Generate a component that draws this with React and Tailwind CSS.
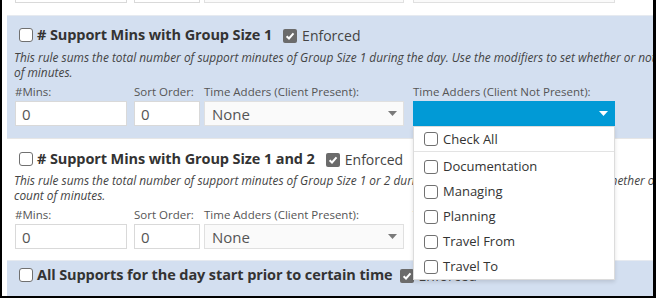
import React from "react";

function Box({ checked }) {
  if (checked)
    return (
      <span className="inline-flex w-[14px] h-[14px] shrink-0 rounded-[2px] bg-[#6b6b6b] items-center justify-center">
        <svg width="10" height="10" viewBox="0 0 10 10">
          <path d="M1.6 5.2 L4 7.5 L8.5 2.4" stroke="white" strokeWidth="2" fill="none" />
        </svg>
      </span>
    );
  return <span className="inline-block w-[14px] h-[14px] shrink-0 rounded-[3px] border border-[#707070] bg-white" />;
}

function Caret({ white }) {
  return (
    <svg width="9" height="5" viewBox="0 0 9 5" className="shrink-0">
      <path d="M0 0 L9 0 L4.5 5 Z" fill={white ? "#ffffff" : "#7a7a7a"} />
    </svg>
  );
}

function TextInput({ w, value }) {
  return (
    <div className={`${w} h-[25px] bg-white border border-[#d9d9d9] flex items-center pl-[6px] text-[15px] text-[#555]`}>
      {value}
    </div>
  );
}

function BoxesOnly() {
  return (
    <div className="flex items-start pl-[8px]">
      <div className="w-[112px] h-[25px] bg-white border border-[#d9d9d9]" />
      <div className="w-[66px] ml-[7px] h-[25px] bg-white border border-[#d9d9d9]" />
      <div className="w-[200px] ml-[4px] h-[25px] bg-[#fafafa] border border-[#e0e0e0]" />
      <div className="w-[202px] ml-[9px] h-[25px] bg-[#fafafa] border border-[#e0e0e0]" />
    </div>
  );
}

function Fields({ blue, menu }) {
  return (
    <div className="flex items-start pl-[8px] text-[11.5px] text-[#555] leading-[16px]">
      <div className="w-[112px] flex flex-col">
        <span className="h-[17px]">#Mins:</span>
        <TextInput w="w-[112px]" value="0" />
      </div>
      <div className="w-[66px] ml-[7px] flex flex-col">
        <span className="h-[17px] whitespace-nowrap">Sort Order:</span>
        <TextInput w="w-[66px]" value="0" />
      </div>
      <div className="w-[200px] ml-[4px] flex flex-col">
        <span className="h-[17px] whitespace-nowrap">Time Adders (Client Present):</span>
        <div className="h-[25px] bg-[#fafafa] border border-[#e0e0e0] flex items-center justify-between pl-[7px] pr-[6px] text-[15px] text-[#555]">
          <span>None</span>
          <Caret />
        </div>
      </div>
      <div className="w-[202px] ml-[9px] flex flex-col relative">
        <span className="h-[17px] whitespace-nowrap">Time Adders (Client Not Present):</span>
        {blue ? (
          <div className="h-[25px] bg-[#019ad6] flex items-center justify-end pr-[7px]">
            <Caret white />
          </div>
        ) : (
          <div className="h-[25px] bg-[#fafafa] border border-[#e0e0e0]" />
        )}
        {menu && (
          <div className="absolute left-0 top-[42px] w-[202px] h-[154px] bg-white border border-[#dcdcdc] shadow-[0_2px_4px_rgba(0,0,0,0.12)] z-10 text-[13px] text-[#333] leading-[25px]">
            <div className="h-[25px] flex items-center pl-[10px] gap-[5px] border-b border-[#e3e3e3]">
              <Box />
              <span>Check All</span>
            </div>
            <div className="pt-[2px]">
              {["Documentation", "Managing", "Planning", "Travel From", "Travel To"].map((t) => (
                <div key={t} className="h-[25px] flex items-center pl-[10px] gap-[5px]">
                  <Box />
                  <span>{t}</span>
                </div>
              ))}
            </div>
          </div>
        )}
      </div>
    </div>
  );
}

function Title({ text, gap }) {
  return (
    <div className="flex items-center h-[20px] pl-[12px] whitespace-nowrap">
      <Box />
      <span className="ml-[4px] text-[14.5px] tracking-[-0.1px] font-bold text-[#333]">{text}</span>
      <span className={gap}>
        <Box checked />
      </span>
      <span className="ml-[5px] text-[14px] text-[#444]">Enforced</span>
    </div>
  );
}

function Desc({ l1, l2, mt }) {
  return (
    <div className={`pl-[7px] ${mt} text-[11.9px] italic text-[#444] leading-[15px] whitespace-nowrap`}>
      <div>{l1}</div>
      <div>{l2}</div>
    </div>
  );
}

export default function App() {
  return (
    <div className="w-[656px] h-[298px] overflow-hidden bg-white border-l-2 border-r-[3px] border-b-2 border-black font-['Open_Sans',sans-serif]">
      <div className="w-[1000px] pl-[5px]">
        {/* previous section, bottom of its fields */}
        <div className="bg-white -mt-[22px] pb-[12px]">
          <BoxesOnly />
        </div>
        {/* section 1 */}
        <div className="bg-[#d3dff0] border-t border-[#e6eaf0] pt-[9px] pb-[12px]">
          <Title text="# Support Mins with Group Size 1" gap="ml-[11px]" />
          <Desc
            mt="mt-[5px]"
            l1="This rule sums the total number of support minutes of Group Size 1 during the day. Use the modifiers to set whether or not staff time adders are included in the total count"
            l2="of minutes."
          />
          <div className="mt-[4px]">
            <Fields blue menu />
          </div>
        </div>
        {/* section 2 */}
        <div className="bg-white border-t border-[#e6e6e6] pt-[10px] pb-[11px]">
          <Title text="# Support Mins with Group Size 1 and 2" gap="ml-[11px]" />
          <Desc
            mt="mt-[4px]"
            l1="This rule sums the total number of support minutes of Group Size 1 or 2 during the day. Use the modifiers to set whether or not staff time adders are included in the total"
            l2="count of minutes."
          />
          <div className="mt-[4px]">
            <Fields />
          </div>
        </div>
        {/* section 3 */}
        <div className="bg-[#d3dff0] border-t border-[#e6eaf0] pt-[4px] pb-[12px]">
          <Title text="All Supports for the day start prior to certain time" gap="ml-[7px]" />
        </div>
      </div>
    </div>
  );
}
